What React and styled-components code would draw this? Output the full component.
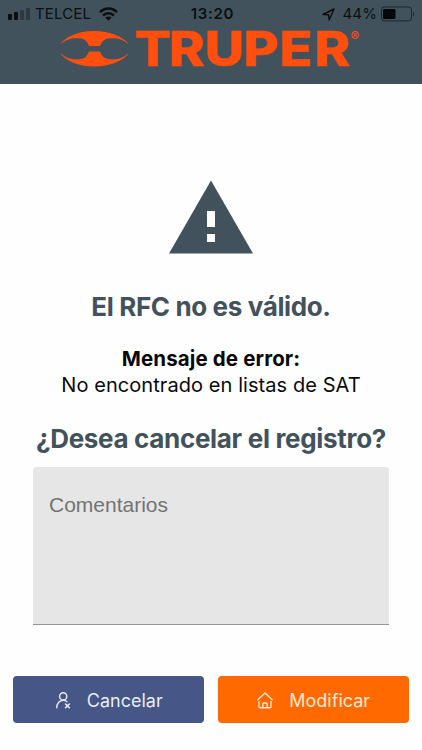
import React from 'react';
import styled, { createGlobalStyle } from 'styled-components';

const GlobalStyle = createGlobalStyle`
  * {
    box-sizing: border-box;
  }
  body {
    margin: 0;
    background: #ffffff;
    font-family: Inter, "Liberation Sans", sans-serif;
  }
`;

const Screen = styled.div`
  width: 422px;
  height: 750px;
  display: flex;
  flex-direction: column;
  overflow: hidden;
  background: #fefefe;
`;

const Header = styled.header`
  height: 84px;
  flex: none;
  background: #42525c;
`;

const StatusBar = styled.div`
  height: 28px;
  display: grid;
  grid-template-columns: 1fr auto 1fr;
  align-items: center;
  padding: 0 7px 0 8px;
  color: #0b0f12;
  font-size: 15px;
  line-height: 28px;
`;

const StatusGroup = styled.div`
  display: flex;
  align-items: center;
  justify-content: ${props => props.$end ? 'flex-end' : 'flex-start'};
`;

const Carrier = styled.span`
  margin: 0 8px 0 5px;
  letter-spacing: 0.15px;
`;

const Clock = styled.span`
  padding-left: 2px;
  font-weight: 600;
  letter-spacing: 0.7px;
`;

const Percent = styled.span`
  margin: 0 4px 0 8px;
  letter-spacing: 0.1px;
`;

const Brand = styled.svg`
  display: block;
  width: 422px;
  height: 56px;
  overflow: visible;
`;

const Content = styled.main`
  flex: 1;
  display: flex;
  flex-direction: column;
  align-items: center;
  padding: 96px 33px 0;
`;

const Warning = styled.svg`
  display: block;
  width: 84px;
  height: 74px;
  flex: none;
`;

const Title = styled.h1`
  margin: 37px 0 0;
  color: #42525c;
  font-size: 26px;
  line-height: 32px;
  font-weight: 700;
  letter-spacing: -0.37px;
  white-space: nowrap;
`;

const Message = styled.p`
  margin: 23px 0 0;
  color: #0a0a0a;
  font-size: 20px;
  line-height: 26px;
  letter-spacing: 0.07px;
  text-align: center;
  white-space: nowrap;
`;

const Label = styled.strong`
  display: block;
  font-weight: 700;
  font-size: 20.5px;
  letter-spacing: 0.13px;
`;

const Question = styled(Title)`
  margin-top: 25px;
  letter-spacing: -0.32px;
`;

const Comments = styled.textarea`
  display: block;
  width: 356px;
  height: 158px;
  flex: none;
  margin: 12px 0 0;
  padding: 25px 16px;
  resize: none;
  outline: none;
  border: 0;
  border-bottom: 1px solid #949494;
  border-radius: 3px 3px 0 0;
  background: #e6e6e6;
  font-family: "Liberation Sans", sans-serif;
  font-size: 21px;
  line-height: 26px;

  &::placeholder {
    color: #737373;
    opacity: 1;
  }
`;

const Actions = styled.footer`
  flex: none;
  display: grid;
  grid-template-columns: 1fr 1fr;
  gap: 13.4px;
  padding: 0 13.3px 26.7px;
`;

const Button = styled.button`
  height: 47.6px;
  display: flex;
  align-items: center;
  justify-content: center;
  gap: 16px;
  padding: 1px 0 0 1px;
  border: 0;
  border-radius: 4px;
  background: ${props => props.$color};
  color: ${props => props.$text};
  font-family: Inter, "Liberation Sans", sans-serif;
  font-size: 18px;

  svg {
    flex: none;
  }
`;

const Signal = () => (
  <svg width="22" height="12" viewBox="0 0 22 12">
    <rect x="0" y="6" width="4" height="6" rx="1" fill="#0b0f12" />
    <rect x="6" y="4" width="4" height="8" rx="1" fill="#0b0f12" />
    <rect x="12" y="2" width="4" height="10" rx="1" fill="#2e3a41" />
    <rect x="18" y="0" width="4" height="12" rx="1" fill="#2e3a41" />
  </svg>
);

const Wifi = () => (
  <svg width="19" height="14" viewBox="0 0 19 14" fill="none" stroke="#0b0f12" strokeWidth="2.5">
    <path d="M1 5.2C5.8.2 13.2.2 18 5.2" />
    <path d="M4 8.5c3.1-3 7.9-3 11 0" />
    <path d="M6.3 10.6c1.8-1.6 4.6-1.6 6.4 0L9.5 13.8z" fill="#0b0f12" stroke="none" />
  </svg>
);

const LocationArrow = () => (
  <svg width="13" height="13" viewBox="0 0 13 13" fill="none" stroke="#0b0f12" strokeWidth="1.4" strokeLinejoin="round">
    <path d="M1 6.5 12 1 7.2 12 6.5 6.7z" />
  </svg>
);

const Battery = () => (
  <svg width="34" height="16" viewBox="0 0 34 16">
    <rect x=".5" y=".9" width="30" height="14" rx="3" fill="none" stroke="#1d272d" />
    <rect x="2" y="3" width="12.5" height="10" rx="1" fill="#05080a" />
    <path d="M32 5.5q2 2.5 0 5z" fill="#1d272d" />
  </svg>
);

const UserRemove = () => (
  <svg width="15" height="17" viewBox="0 0 15 17" fill="none" stroke="currentColor" strokeWidth="1.4" strokeLinecap="round">
    <circle cx="7.2" cy="4.4" r="3.6" />
    <path d="M.8 15.7c0-4.3 2.5-7.3 6.4-7.3 1.5 0 2.7.4 3.7 1.1" />
    <path d="m9.6 12 3.7 3.7m0-3.7-3.7 3.7" strokeWidth="1.6" />
  </svg>
);

const Home = () => (
  <svg width="16" height="17" viewBox="0 0 16 17" fill="none" stroke="currentColor" strokeWidth="1.4" strokeLinecap="round" strokeLinejoin="round">
    <path d="m.8 7.7 7.2-6.8 7.2 6.8M2 9.5v5.2c0 .7.4 1.1 1.1 1.1h9.800c.7 0 1.1-.4 1.1-1.1V9.5" />
    <path d="M5.8 15.5v-3.300c0-.8.4-1.200 1.100-1.200h2.200c.7 0 1.100.4 1.100 1.200v3.300" />
  </svg>
);

function App() {
  return (
    <Screen>
      <GlobalStyle />
      <Header>
        <StatusBar>
          <StatusGroup>
            <Signal />
            <Carrier>TELCEL</Carrier>
            <Wifi />
          </StatusGroup>
          <Clock>13:20</Clock>
          <StatusGroup $end>
            <LocationArrow />
            <Percent>44%</Percent>
            <Battery />
          </StatusGroup>
        </StatusBar>
        <Brand viewBox="0 28 422 56" fill="#ff4f0f">
          <path d="M60 44.5C66 36.5 78 31 94 31s29 5.500 35 13.500C122 38.500 116 37.500 108 38.500q-6 1-8 7.500H89q-2-6.500-8-7.500C73 37.500 67 38.500 60 44.500z" />
          <path d="M60 53C66 61 78 66.500 94 66.500S123 61 129 53C122 59 116 60 108 59q-6-1-8-7.500H89q-2 6.500-8 7.500C73 60 67 59 60 53z" />
          <text
            transform="scale(1.12 1)"
            x="120.400 150.900 182.800 217.400 249.600 280.700"
            y="66"
            fontFamily="Inter"
            fontWeight="800"
            fontSize="48.5"
            stroke="#ff4f0f"
            strokeWidth=".4"
          >
            TRUPER
          </text>
          <text x="350.500" y="41" fontFamily="Inter" fontWeight="600" fontSize="13">®</text>
        </Brand>
      </Header>

      <Content>
        <Warning viewBox="0 0 84 74">
          <path d="M42 .5 84 73.500H0z" fill="#42525c" />
          <path d="M38 31h8v16h-8zM38 54h8v8h-8z" fill="#fefefe" />
        </Warning>
        <Title>El RFC no es válido.</Title>
        <Message>
          <Label>Mensaje de error:</Label>
          No encontrado en listas de SAT
        </Message>
        <Question>¿Desea cancelar el registro?</Question>
        <Comments placeholder="Comentarios" />
      </Content>

      <Actions>
        <Button $color="#455687" $text="#e8edf8">
          <UserRemove />
          Cancelar
        </Button>
        <Button $color="#ff6900" $text="#ffe9d5">
          <Home />
          Modificar
        </Button>
      </Actions>
    </Screen>
  );
}

export default App;
